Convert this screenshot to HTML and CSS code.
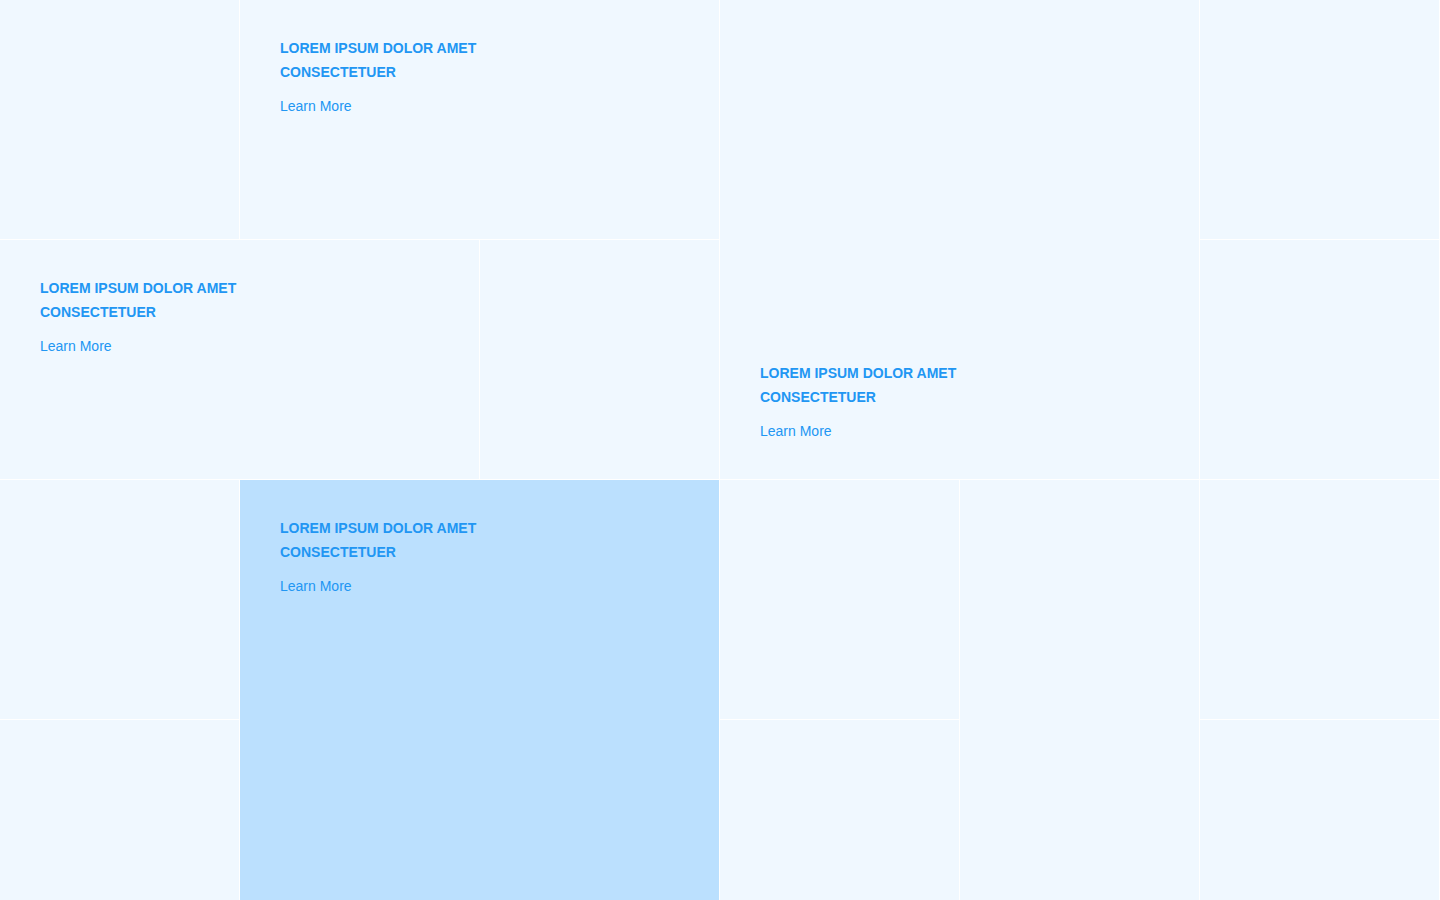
FILE: index.html
```html
<!DOCTYPE html>
<html lang="en">
<head>
<meta charset="utf-8">
<title>Grid</title>
<link rel="stylesheet" href="styles.css">
</head>
<body>
<main class="grid">
  <div class="cell"></div>
  <div class="cell card span-c2">
    <h3 class="card-title">Lorem ipsum dolor amet<br>consectetuer</h3>
    <a class="card-link" href="#">Learn More</a>
  </div>
  <div class="cell card span-c2 span-r2 card-bottom">
    <h3 class="card-title">Lorem ipsum dolor amet<br>consectetuer</h3>
    <a class="card-link" href="#">Learn More</a>
  </div>
  <div class="cell"></div>

  <div class="cell card span-c2">
    <h3 class="card-title">Lorem ipsum dolor amet<br>consectetuer</h3>
    <a class="card-link" href="#">Learn More</a>
  </div>
  <div class="cell"></div>
  <div class="cell"></div>

  <div class="cell"></div>
  <div class="cell card span-c2 span-r2 card-active">
    <h3 class="card-title">Lorem ipsum dolor amet<br>consectetuer</h3>
    <a class="card-link" href="#">Learn More</a>
  </div>
  <div class="cell"></div>
  <div class="cell span-r2"></div>
  <div class="cell"></div>

  <div class="cell"></div>
  <div class="cell"></div>
  <div class="cell"></div>
</main>
</body>
</html>
```
FILE: styles.css
```css
* { box-sizing: border-box; }
html, body {
  margin: 0;
  padding: 0;
  background: #f0f8ff;
  font-family: "Liberation Sans", Arial, sans-serif;
  overflow: hidden;
}
body { height: 900px; }
.grid {
  display: grid;
  grid-template-columns: repeat(6, 240px);
  grid-auto-rows: 240px;
  width: 1440px;
}
.cell {
  background: #f0f8ff;
  border-right: 1px solid #ffffff;
  border-bottom: 1px solid #ffffff;
}
.span-c2 { grid-column: span 2; }
.span-r2 { grid-row: span 2; }
.card {
  display: flex;
  flex-direction: column;
  align-items: flex-start;
  padding: 36px 40px;
}
.card-bottom { justify-content: flex-end; }
.card-active { background: #bbe0fe; }
.card-title {
  margin: 0;
  font-size: 14px;
  line-height: 24px;
  font-weight: 700;
  text-transform: uppercase;
  color: #2196f3;
}
.card-link {
  margin-top: 10px;
  font-size: 14px;
  line-height: 24px;
  color: #2196f3;
  text-decoration: none;
}
```
